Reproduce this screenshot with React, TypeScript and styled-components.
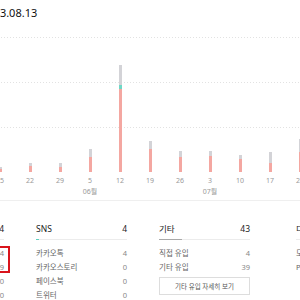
import React from "react";
import styled, { createGlobalStyle } from "styled-components";

const GlobalStyle = createGlobalStyle`
    html, body {
        margin: 0;
        padding: 0;
        background: #fff;
        overflow: hidden;
    }
    body {
        font-family: "Noto Sans", "Noto Sans CJK KR", sans-serif;
    }
`

type Bar = { day: string; red: number; teal: number; gray: number; month?: string }

const bars: Bar[] = [
    { day: "1", red: 2, teal: 0, gray: 2 },
    { day: "8", red: 3, teal: 0, gray: 2 },
    { day: "15", red: 3, teal: 0, gray: 2 },
    { day: "22", red: 6, teal: 0, gray: 3 },
    { day: "29", red: 5, teal: 0, gray: 4 },
    { day: "5", red: 15, teal: 0, gray: 8, month: "06월" },
    { day: "12", red: 83, teal: 4, gray: 20 },
    { day: "19", red: 23, teal: 0, gray: 8 },
    { day: "26", red: 15, teal: 0, gray: 6 },
    { day: "3", red: 16, teal: 0, gray: 5, month: "07월" },
    { day: "10", red: 13, teal: 0, gray: 4 },
    { day: "17", red: 9, teal: 0, gray: 11 },
    { day: "24", red: 20, teal: 0, gray: 13 },
]

type Row = { label: string; value: string }

const columns: { title: string; total: string; fill: string; ratio: number; rows: Row[]; more?: string }[] = [
    {
        title: "검색", total: "14", fill: "#5fcfbd", ratio: 0.3,
        rows: [
            { label: "네이버", value: "4" },
            { label: "다음", value: "9" },
            { label: "구글", value: "0" },
            { label: "빙", value: "0" },
        ],
    },
    {
        title: "SNS", total: "4", fill: "#5fcfbd", ratio: 0.035,
        rows: [
            { label: "카카오톡", value: "4" },
            { label: "카카오스토리", value: "0" },
            { label: "페이스북", value: "0" },
            { label: "트위터", value: "0" },
        ],
    },
    {
        title: "기타", total: "43", fill: "#a9a9a9", ratio: 0.25,
        rows: [
            { label: "직접 유입", value: "4" },
            { label: "기타 유입", value: "39" },
        ],
        more: "기타 유입 자세히 보기",
    },
]

export default function App() {
    return (
        <>
            <GlobalStyle/>
            <Page>
                <Title>2023.08.13</Title>
                <Chart>
                    {bars.map((b, i) => (
                        <Slot key={i}>
                            <BarArea>
                                <Stack>
                                    <Seg color="#d3d3d7" style={{ height: b.gray }}/>
                                    {b.teal > 0 && <Seg color="#6fd8c6" style={{ height: b.teal }}/>}
                                    <Seg color="#f4a7a1" style={{ height: b.red }}/>
                                </Stack>
                            </BarArea>
                            <Day>{b.day}</Day>
                            <Month>{b.month ?? ""}</Month>
                        </Slot>
                    ))}
                </Chart>
                <Sections>
                    {columns.map((c, i) => (
                        <Column key={c.title}>
                            <Head>
                                <span>{c.title}</span>
                                <span>{c.total}</span>
                                <Progress color={c.fill} style={{ width: `${c.ratio * 100}%` }}/>
                            </Head>
                            <List>
                                {c.rows.map(r => (
                                    <Item key={r.label}>
                                        <span>{r.label}</span>
                                        <Value>{r.value}</Value>
                                    </Item>
                                ))}
                                {i === 0 && <RedMark/>}
                            </List>
                            {c.more && <MoreButton>{c.more}</MoreButton>}
                        </Column>
                    ))}
                    <LastColumn>
                        <Head>
                            <span>디바이스</span>
                        </Head>
                        <List>
                            <Item><span>도메인</span></Item>
                            <Item><span>PC</span></Item>
                        </List>
                    </LastColumn>
                </Sections>
            </Page>
        </>
    )
}

const Page = styled.div`
    width: 620px;
    margin-left: -92px;
`

const Title = styled.h2`
    margin: 0;
    padding: 5px 0 0 73px;
    height: 32px;
    box-sizing: border-box;
    font-size: 11px;
    line-height: 16px;
    font-weight: 400;
    color: #111;
`

const Chart = styled.div`
    display: flex;
    padding-left: 17px;
    margin-top: 5px;
    background-image:
        linear-gradient(to right, #e2e2e2 50%, transparent 50%),
        linear-gradient(to right, #e2e2e2 50%, transparent 50%),
        linear-gradient(to right, #e2e2e2 50%, transparent 50%);
    background-size: 3px 1px;
    background-repeat: repeat-x;
    background-position: 0 0, 0 45px, 0 90px;
    border-bottom: 1px solid #efefef;
    padding-bottom: 3px;
`

const Slot = styled.div`
    width: 30px;
    display: flex;
    flex-direction: column;
    align-items: center;
`

const BarArea = styled.div`
    height: 135px;
    display: flex;
    align-items: flex-end;
`

const Stack = styled.div`
    width: 3px;
    display: flex;
    flex-direction: column;
`

const Seg = styled.div<{ color: string }>`
    background: ${p => p.color};
`

const Day = styled.div`
    margin-top: 4px;
    font-size: 7px;
    line-height: 10px;
    color: #999;
`

const Month = styled.div`
    font-size: 7px;
    line-height: 11px;
    height: 11px;
    color: #999;
`

const Sections = styled.div`
    display: flex;
    gap: 32px;
    padding: 21px 0 0 5px;
`

const Column = styled.div`
    width: 91px;
    display: flex;
    flex-direction: column;
`

const LastColumn = styled(Column)`
    margin-left: 14px;
`

const Head = styled.div`
    position: relative;
    display: flex;
    justify-content: space-between;
    font-size: 8.5px;
    line-height: 14px;
    color: #222;
    padding-bottom: 3px;
    border-bottom: 1px solid #ececec;
`

const Progress = styled.div<{ color: string }>`
    position: absolute;
    left: 0;
    bottom: -1px;
    height: 1px;
    background: ${p => p.color};
`

const List = styled.ul`
    position: relative;
    margin: 6px 0 0;
    padding: 0;
    list-style: none;
`

const Item = styled.li`
    display: flex;
    justify-content: space-between;
    font-size: 7.5px;
    line-height: 14px;
    color: #666;
`

const Value = styled.span`
    color: #888;
`

const RedMark = styled.div`
    position: absolute;
    right: -6px;
    top: 0;
    width: 16px;
    height: 27px;
    border: 2px solid #d9141c;
    box-sizing: border-box;
`

const MoreButton = styled.button`
    margin-top: 3px;
    height: 18px;
    border: 1px solid #ddd;
    background: #fff;
    font-family: inherit;
    font-size: 6.5px;
    color: #555;
    padding: 0;
`
